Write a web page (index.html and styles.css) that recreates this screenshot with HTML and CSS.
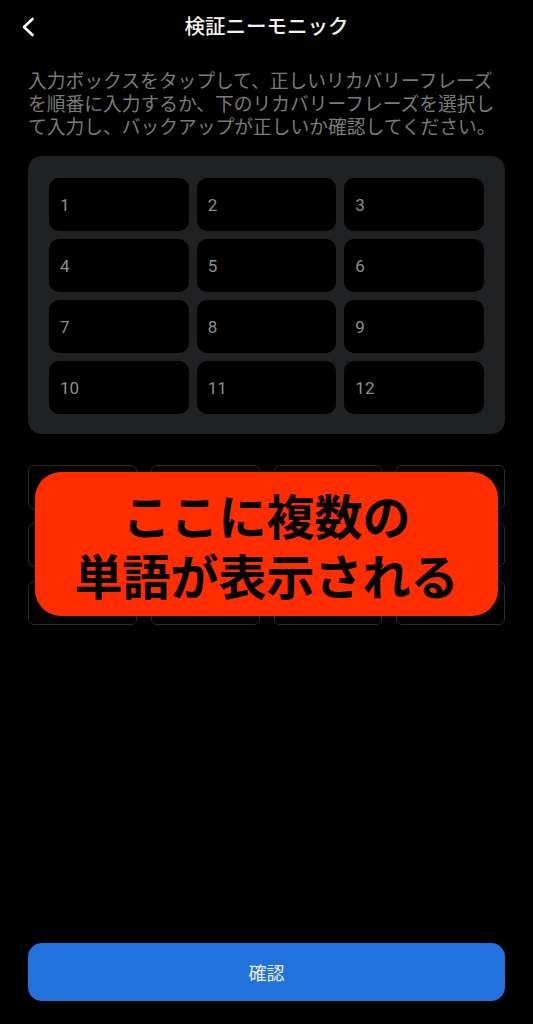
FILE: index.html
```html
<!DOCTYPE html>
<html lang="ja">
<head>
<meta charset="utf-8">
<link rel="stylesheet" href="styles.css">
</head>
<body>
<div class="page">
  <header class="topbar">
    <svg class="back" width="14" height="20" viewBox="0 0 14 20"><path d="M11.5 2 L3 10 L11.5 18" fill="none" stroke="#fff" stroke-width="2.6" stroke-linecap="round" stroke-linejoin="round"/></svg>
    <h1 class="title">検証ニーモニック</h1>
  </header>
  <p class="desc">入力ボックスをタップして、正しいリカバリーフレーズを順番に入力するか、下のリカバリーフレーズを選択して入力し、バックアップが正しいか確認してください。</p>
  <section class="panel">
    <div class="cell">1</div><div class="cell">2</div><div class="cell">3</div>
    <div class="cell">4</div><div class="cell">5</div><div class="cell">6</div>
    <div class="cell">7</div><div class="cell">8</div><div class="cell">9</div>
    <div class="cell">10</div><div class="cell">11</div><div class="cell">12</div>
  </section>
  <section class="words">
    <div class="chip"></div><div class="chip"></div><div class="chip"></div><div class="chip"></div>
    <div class="chip"></div><div class="chip"></div><div class="chip"></div><div class="chip"></div>
    <div class="chip"></div><div class="chip"></div><div class="chip"></div><div class="chip"></div>
    <div class="note">ここに複数の<br>単語が表示される</div>
  </section>
  <div class="spacer"></div>
  <button class="confirm">確認</button>
</div>
</body>
</html>
```
FILE: styles.css
```css
html, body {
  margin: 0;
  padding: 0;
  background: #000;
}
body {
  font-family: "Noto Sans CJK JP", "Noto Sans", sans-serif;
  color: #fff;
}
.page {
  display: flex;
  flex-direction: column;
  min-height: 1024px;
  padding: 0 28px;
  box-sizing: border-box;
}
.topbar {
  position: relative;
  height: 50px;
  display: flex;
  align-items: center;
  justify-content: center;
}
.back {
  position: absolute;
  left: -7px;
  top: 17px;
}
.title {
  margin: 0;
  font-size: 20.5px;
  font-weight: 500;
  line-height: 50px;
  color: #f2f2f2;
}
.desc {
  margin: 18px 0 0;
  font-size: 18.75px;
  line-height: 23px;
  color: #7a7a7a;
}
.panel {
  margin-top: 19px;
  background: #202123;
  border-radius: 14px;
  padding: 22px 21px 20px;
  display: grid;
  grid-template-columns: repeat(3, 1fr);
  grid-auto-rows: 53px;
  gap: 8px;
}
.cell {
  background: #000;
  border-radius: 10px;
  display: flex;
  align-items: center;
  padding-left: 11px;
  font-family: Roboto, "Noto Sans", sans-serif;
  font-size: 17px;
  color: #8e8e8e;
}
.words {
  position: relative;
  margin-top: 31px;
  display: grid;
  grid-template-columns: repeat(4, 1fr);
  grid-auto-rows: 44px;
  column-gap: 14px;
  row-gap: 14px;
}
.chip {
  border: 1px solid #2b2b2d;
  border-radius: 6px;
}
.note {
  position: absolute;
  left: 7px;
  top: 7px;
  width: 463px;
  height: 144px;
  background: #ff2d00;
  border-radius: 26px;
  display: flex;
  align-items: center;
  justify-content: center;
  text-align: center;
  font-size: 48px;
  font-weight: 700;
  line-height: 60px;
  color: #000;
}
.spacer {
  flex: 1;
}
.confirm {
  margin: 0 0 23px;
  height: 58px;
  border: none;
  border-radius: 14px;
  background: #2372dc;
  color: #e9eef7;
  font-family: "Noto Sans CJK JP", "Noto Sans", sans-serif;
  font-size: 18px;
}
```
